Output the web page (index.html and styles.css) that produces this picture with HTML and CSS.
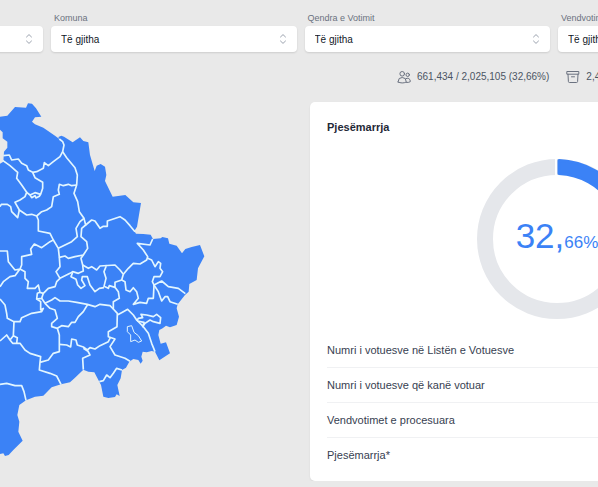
FILE: index.html
```html
<!DOCTYPE html>
<html lang="sq">
<head>
<meta charset="utf-8">
<meta name="viewport" content="width=device-width, initial-scale=1">
<title>Pjesëmarrja</title>
<link rel="stylesheet" href="styles.css">
</head>
<body>
<svg class="defs" aria-hidden="true">
  <symbol id="chevrons" viewBox="0 0 8 12">
    <path d="M1.5 4 4 1.6 6.5 4M1.5 8 4 10.4 6.5 8"/>
  </symbol>
</svg>
<form class="filters">
  <div class="filter filter-start">
    <label for="region">&nbsp;</label>
    <div class="select"><select id="region"><option>Kosovë</option></select><svg class="chevrons"><use href="#chevrons"/></svg></div>
  </div>
  <div class="filter">
    <label for="komuna">Komuna</label>
    <div class="select"><select id="komuna"><option>Të gjitha</option></select><svg class="chevrons"><use href="#chevrons"/></svg></div>
  </div>
  <div class="filter">
    <label for="qendra">Qendra e Votimit</label>
    <div class="select"><select id="qendra"><option>Të gjitha</option></select><svg class="chevrons"><use href="#chevrons"/></svg></div>
  </div>
  <div class="filter filter-end">
    <label for="vend">Vendvotimi</label>
    <div class="select"><select id="vend"><option>Të gjitha</option></select><svg class="chevrons"><use href="#chevrons"/></svg></div>
  </div>
</form>
<div class="stats">
  <div class="stat">
    <svg class="icon" viewBox="0 0 14 14"><circle cx="5.200" cy="3.800" r="2.300"/><circle cx="10.700" cy="4.800" r="1.700"/><path d="M1.200 12v-.5a4 4 0 0 1 8 0v.5C6.800 13.300 3.600 13.300 1.200 12zM8.800 8.700a2.900 2.900 0 0 1 4.500 2.500v.5c-1.200.7-2.600.9-4 .7"/></svg>
    <span>661,434 / 2,025,105 (32,66%)</span>
  </div>
  <div class="stat">
    <svg class="icon" viewBox="0 0 14 14"><path d="M1.200 1.500h11.600v2.700H1.200zM2 4.200l.4 7.300q.1 1 1 1h7.200q.9 0 1-1L12 4.200M5.500 6.800h3"/></svg>
    <span>2,4</span>
  </div>
</div>
<main class="content">
  <div class="map-area">
    <svg class="map" viewBox="0 0 630 1110" role="img" aria-label="Komunat">
      <path class="land" d="M-6 66 22 62 45 36 78 38 84 25 96 26 108 40 124 65 105 67 96 80 105 88 130 98 165 122 178 132 175 126 184 122 192 125 218 142 240 127 250 138 265 142 270 180 284 228 290 212 302 207 315 215 319 240 315 258 338 305 376 300 400 322 423 324 411 395 403 408 408 416 430 417 452 419 459 432 482 430 487 426 504 430 508 446 530 452 546 475 556 462 575 456 600 450 613 484 594 520 590 555 568 567 566 590 555 600 533 628 530 640 537 665 530 690 510 697 498 692 488 700 478 705 475 720 479 735 482 746 498 742 510 775 478 796 470 780 465 770 455 768 440 772 428 770 424 785 428 797 422 806 415 795 400 792 388 800 378 818 366 825 362 850 352 870 359 903 350 898 345 906 325 909 310 905 303 870 290 845 283 832 265 830 250 824 225 848 210 862 183 868 155 877 130 902 105 905 78 916 58 930 52 960 58 980 55 1010 68 1037 40 1065 26 1080 15 1083 10 1075-6 1078V210L10 200 12 170 22 158 22 140 8 130 8 112-6 98z"/>
      <g class="borders">
        <path d="M10 182 28 180 35 195 55 192 65 205 80 212 85 225 98 232 110 230 130 220 133 203 145 212 160 200 180 185 188 170 192 150 188 140 178 132"/>
        <path d="M188 170 200 188 225 218 232 240 230 270 222 295 233 320 238 350 252 370 257 390 245 400 243 425 260 440 263 460 250 480 225 485 205 490 195 483 178 487 175 460 160 435 150 415 115 408V375L110 363 95 358 80 360 58 345 45 322 60 315 75 305 80 292 65 270 50 250 53 232 30 212 8 196"/>
        <path d="M230 270 215 272 205 268 190 272 178 268 175 285 178 298 160 305 155 335 140 345 125 350 110 363"/>
        <path d="M98 232 105 248 128 262 128 280 122 298 105 293 90 300 80 292M90 300 95 308 105 302 108 309 118 304 122 298"/>
        <path d="M0 335 4 328 22 328 32 335 35 350 53 368 58 345M175 460 215 440 232 425 228 400 240 380 252 370"/>
        <path d="M257 390 275 375 285 378 300 400 310 394 322 394 322 378 360 365 375 375 390 392 405 410"/>
        <path d="M160 435 150 440 125 458 103 447 92 462 95 478 65 485 65 510 60 522 45 525 25 500 22 468 0 468M60 522 45 542 30 545 10 560 0 575"/>
        <path d="M60 522 75 530 75 550 85 560 82 580 105 580 115 570 120 592 130 595 145 580 165 575 170 560 180 550 168 530 180 515 178 487M180 550 210 535 218 530 235 535 250 528 248 510 243 490 250 480"/>
        <path d="M218 532 213 545 228 553 233 570 243 580 255 572 245 555 247 545 262 545 270 570 285 590 298 580 312 578"/>
        <path d="M248 510 265 520 275 515 290 525 300 513 345 510 360 525 370 538 365 555 345 562 345 577 328 572 325 580 312 574 318 550 312 530 320 510"/>
        <path d="M370 538 385 520 400 505 420 507 440 495 443 485 430 465 412 445 450 450 458 432"/>
        <path d="M443 490 455 495 465 515 475 500 482 505 480 520 488 530 480 545 462 545 457 560 462 570 485 558 505 575 535 580 556 596M462 570 475 590 485 618 495 605 503 605 510 620 533 628"/>
        <path d="M462 570 460 610 445 610 440 625 420 622 400 628 415 610 410 590 400 578 390 590 378 585 375 560 365 555"/>
        <path d="M345 577 355 590 358 610 340 620 340 642 352 655 351 695 325 710 325 725 345 732 330 755 345 780 375 790 390 799M352 660 370 650 383 643 400 660 410 675 430 695 445 715 455 745 465 770"/>
        <path d="M410 678 415 670 428 668 423 658 440 660 460 665 470 658 482 668 480 685 460 680 450 675 435 685 428 695 432 682 412 678"/>
        <path class="inset" d="M382 695 395 692 402 712 415 722 425 738 415 742 405 735 392 740 392 720 382 710z"/>
        <path d="M120 592 112 595 110 612 122 620 122 645 130 640 125 650 95 655 65 668 60 680 42 680 22 670 20 655 15 630 0 612M110 612 125 610 130 595"/>
        <path d="M125 610 135 625 155 615 165 608 180 618 205 618 230 622 262 628 285 635 300 628 330 632 340 642M135 625 150 640 165 645 172 670 155 685 155 695 172 700 185 692 205 695 215 682 225 682 235 665 250 650 262 630"/>
        <path d="M172 700 178 720 178 770 160 775 145 795 120 802 118 825 150 835 170 843 183 868M120 802 122 785 90 775 75 765 60 745 50 745 38 745 30 735 40 722 52 728 50 745M42 680 40 722M30 735 20 720 0 738"/>
        <path d="M178 748 200 750 212 756 215 732 228 735 232 750 250 756 262 765 270 758 285 762 300 752 325 740 332 726M262 765 270 780 248 790 250 824M250 760 265 770"/>
        <path d="M298 860 310 857 320 840 330 848 340 835 350 820 366 825M0 868 20 865 45 872 65 872 72 890 78 916"/>
      </g>
    </svg>
  </div>
  <section class="card">
    <h2>Pjesëmarrja</h2>
    <div class="donut">
      <svg viewBox="0 0 160 160" aria-hidden="true">
        <circle class="track" cx="80" cy="80" r="72"/>
        <path class="gap" d="M79 0V18"/>
        <path class="value" d="M82 1.500A78.500 78.500 0 0 1 147.700 118L137.300 112A66 66 0 0 0 82 14.500z"/>
      </svg>
      <p class="percent">32,<small>66%</small></p>
    </div>
    <ul class="rows">
      <li>Numri i votuesve në Listën e Votuesve</li>
      <li>Numri i votuesve që kanë votuar</li>
      <li>Vendvotimet e procesuara</li>
      <li>Pjesëmarrja*</li>
    </ul>
  </section>
</main>
</body>
</html>
```
FILE: styles.css
```css
* { box-sizing: border-box; }

body {
  margin: 0;
  overflow: hidden;
  background: #e9e9e9;
  color: #374151;
  font-family: "Liberation Sans", Arial, sans-serif;
  font-size: 11px;
}

.defs { display: none; }

.filters {
  display: grid;
  grid-template-columns: 43px 1fr 1fr 40px;
  gap: 8px;
  padding-top: 12px;
}

.filter {
  display: flex;
  flex-direction: column;
  gap: 2px;
  min-width: 0;
}

.filter-start { align-items: flex-end; }

.filter label {
  padding-left: 3px;
  color: #6b7280;
  font-size: 9px;
  line-height: 12px;
  white-space: nowrap;
}

.select { position: relative; }

.filter-start .select,
.filter-end .select { width: 246px; }

.select select {
  appearance: none;
  display: block;
  width: 100%;
  height: 26px;
  padding: 0 28px 0 10px;
  border: 0;
  border-radius: 4px;
  background: #fff;
  box-shadow: 0 1px 2px rgb(0 0 0 / 12%);
  color: #111827;
  font: 10px "Liberation Sans", Arial, sans-serif;
}

.chevrons {
  position: absolute;
  top: 7px;
  right: 10px;
  width: 8px;
  height: 12px;
  fill: none;
  stroke: #9ca3af;
  stroke-linecap: round;
  stroke-linejoin: round;
  pointer-events: none;
}

.stats {
  display: flex;
  gap: 17px;
  padding: 18px 0 18px 397px;
  color: #4b5563;
  font-size: 10px;
  line-height: 14px;
  white-space: nowrap;
}

.stat {
  display: flex;
  align-items: center;
  gap: 6px;
}

.icon {
  flex: none;
  width: 14px;
  height: 14px;
  fill: none;
  stroke: #6b7280;
  stroke-linecap: round;
  stroke-linejoin: round;
}

.content {
  display: flex;
  align-items: flex-start;
}

.map-area { flex: 0 0 310px; }

.map {
  display: block;
  width: 210px;
  height: auto;
  margin-top: -7px;
}

.land { fill: #3b82f6; }

.borders {
  fill: none;
  stroke: #e2f6ff;
  stroke-width: 5;
  stroke-linejoin: round;
}

.inset { stroke-width: 3; }

.card {
  flex: 1 0 494px;
  padding: 17px 17px 8px;
  border-radius: 5px;
  background: #fff;
  box-shadow: 0 1px 2px rgb(0 0 0 / 8%);
}

.card h2 {
  margin: 0 0 24px;
  color: #1f2937;
  font-size: 11px;
  line-height: 16px;
}

.donut {
  display: grid;
  place-items: center;
}

.donut > * { grid-area: 1 / 1; }

.donut svg {
  width: 160px;
  height: 160px;
}

.track {
  fill: none;
  stroke: #e5e7eb;
  stroke-width: 16;
}

.gap {
  stroke: #fff;
  stroke-width: 2;
}

.value {
  fill: #3b82f6;
  stroke: #3b82f6;
  stroke-width: 3;
  stroke-linejoin: round;
}

.percent {
  margin: 0;
  color: #3b82f6;
  font-size: 35px;
  line-height: 44px;
}

.percent small { font-size: 17px; }

.rows {
  margin: 14px 0 0;
  padding: 0;
  list-style: none;
}

.rows li {
  height: 35px;
  border-bottom: 1px solid #f0f1f3;
  line-height: 34px;
}

.rows li:last-child { border-bottom: 0; }
```
